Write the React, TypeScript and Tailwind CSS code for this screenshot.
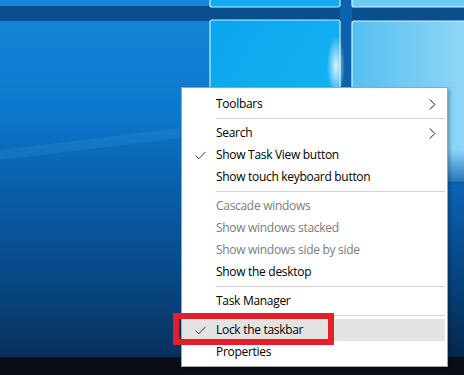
import React from 'react';

type MenuEntry =
    | { kind: 'item'; label: string; checked?: boolean; disabled?: boolean; submenu?: boolean; hover?: boolean }
    | { kind: 'sep' };

const entries: MenuEntry[] = [
    { kind: 'item', label: 'Toolbars', submenu: true },
    { kind: 'sep' },
    { kind: 'item', label: 'Search', submenu: true },
    { kind: 'item', label: 'Show Task View button', checked: true },
    { kind: 'item', label: 'Show touch keyboard button' },
    { kind: 'sep' },
    { kind: 'item', label: 'Cascade windows', disabled: true },
    { kind: 'item', label: 'Show windows stacked', disabled: true },
    { kind: 'item', label: 'Show windows side by side', disabled: true },
    { kind: 'item', label: 'Show the desktop' },
    { kind: 'sep' },
    { kind: 'item', label: 'Task Manager' },
    { kind: 'sep' },
    { kind: 'item', label: 'Lock the taskbar', checked: true, hover: true },
    { kind: 'item', label: 'Properties' },
];

const Check = () => (
    <svg width="11" height="9" viewBox="0 0 11 9" className="absolute left-[13px] top-[7px]">
        <path d="M0.5 4.5 L3.8 7.8 L10.5 0.8" fill="none" stroke="#3a3a3a" strokeWidth="1" />
    </svg>
);

const Chevron = () => (
    <svg width="7" height="11" viewBox="0 0 7 11" className="absolute right-[9px] top-[6px]">
        <path d="M0.8 0.5 L5.8 5.5 L0.8 10.5" fill="none" stroke="#1a1a1a" strokeWidth="1" />
    </svg>
);

// Windows 10 "hero" wallpaper, roughly
const Wallpaper = () => (
    <svg width="464" height="375" viewBox="0 0 464 375" className="absolute inset-0">
        <defs>
            <linearGradient id="base" x1="0" y1="0" x2="0" y2="1">
                <stop offset="0" stopColor="#1687da" />
                <stop offset="0.3" stopColor="#0c78cd" />
                <stop offset="0.5" stopColor="#0a5ea9" />
                <stop offset="0.75" stopColor="#084784" />
                <stop offset="0.95" stopColor="#06315e" />
            </linearGradient>
            <linearGradient id="paneL" x1="0" y1="0" x2="1" y2="1">
                <stop offset="0" stopColor="#0ca5ec" />
                <stop offset="1" stopColor="#16b8f6" />
            </linearGradient>
            <linearGradient id="paneR" x1="0" y1="0" x2="1" y2="0">
                <stop offset="0" stopColor="#55bff1" />
                <stop offset="1" stopColor="#92d7f6" />
            </linearGradient>
            <linearGradient id="fade" x1="0" y1="0" x2="0" y2="1">
                <stop offset="0" stopColor="#0a5ea9" stopOpacity="0" />
                <stop offset="1" stopColor="#0a5ea9" stopOpacity="1" />
            </linearGradient>
            <linearGradient id="col" x1="0" y1="0" x2="0" y2="1">
                <stop offset="0" stopColor="#0b64b6" />
                <stop offset="1" stopColor="#04264c" />
            </linearGradient>
            <radialGradient id="glow" cx="0.5" cy="0.5" r="0.5">
                <stop offset="0" stopColor="#ffffff" stopOpacity="0.85" />
                <stop offset="1" stopColor="#ffffff" stopOpacity="0" />
            </radialGradient>
        </defs>
        <rect x="0" y="0" width="464" height="375" fill="url(#base)" />
        <polygon points="0,150 180,128 180,138 0,160" fill="#3a9ee6" opacity="0.2" />

        <rect x="0" y="6" width="464" height="15" fill="#0b4e8d" />
        <rect x="340" y="0" width="12" height="240" fill="#0b62ad" />

        <rect x="210" y="-6" width="130" height="13" rx="2" fill="#14aaf0" stroke="#c9efff" strokeWidth="1.2" />
        <rect x="352" y="-6" width="120" height="13" rx="2" fill="#6fcaf3" stroke="#d4f3ff" strokeWidth="1.2" />

        <rect x="210" y="20" width="130" height="220" rx="2" fill="url(#paneL)" stroke="#c9efff" strokeWidth="1.2" />
        <rect x="352" y="21" width="120" height="160" rx="2" fill="url(#paneR)" stroke="#d4f3ff" strokeWidth="1.2" />
        <rect x="352" y="150" width="112" height="40" fill="url(#fade)" />
        <rect x="448" y="185" width="16" height="175" fill="url(#col)" />
        <ellipse cx="336" cy="66" rx="9" ry="30" fill="url(#glow)" />

        <rect x="0" y="357" width="464" height="18" fill="#080d16" />
    </svg>
);

export default function App() {
    return (
        <div className="relative w-[464px] h-[375px] overflow-hidden bg-[#0b5aa3]" style={{ fontFamily: '"Open Sans", "Noto Sans", sans-serif' }}>
            <Wallpaper />

            <div className="absolute left-[181px] top-[87px] w-[267px] h-[280px] bg-white border border-[#a3a3a3] pt-[5px] pb-[3px] shadow-[2px_2px_3px_rgba(0,0,0,0.25)]">
                {entries.map((entry, i) =>
                    entry.kind === 'sep' ? (
                        <div key={i} className="h-[7px] flex items-center pl-[34px] pr-[2px]">
                            <div className="h-px w-full bg-[#d2d2d2]" />
                        </div>
                    ) : (
                        <div
                            key={i}
                            className={`relative h-[22px] mr-[2px] flex items-center pl-[34px] text-[12px] tracking-[-0.3px] ${entry.hover ? 'bg-[#e3e3e3]' : ''} ${entry.disabled ? 'text-[#7c7c7c]' : 'text-black'}`}
                        >
                            {entry.checked && <Check />}
                            <span>{entry.label}</span>
                            {entry.submenu && <Chevron />}
                        </div>
                    )
                )}
            </div>

            <div className="absolute left-[173px] top-[313px] w-[161px] h-[32px] border-[6px] border-[#e2202c]" />
        </div>
    );
}
